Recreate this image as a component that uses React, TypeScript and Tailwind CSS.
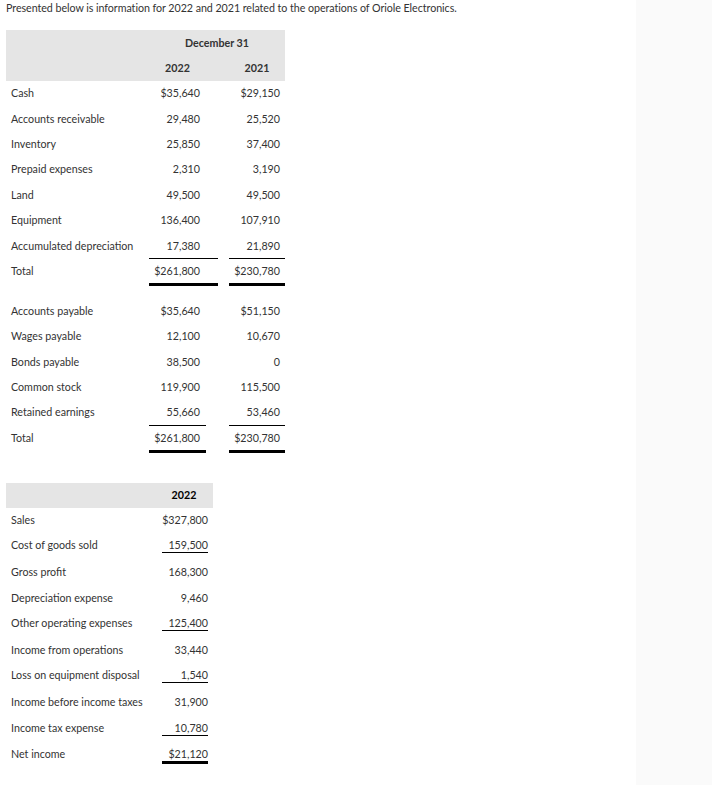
import clsx from 'clsx';

const cn = clsx;

type Line = 'none' | 'thin' | 'thick';

interface BalanceRow {
    label: string;
    y2022: string;
    y2021: string;
    line?: Line;
}

interface IncomeRow {
    label: string;
    amount: string;
    line?: Line;
}

const assets: BalanceRow[] = [
    { label: 'Cash', y2022: '$35,640', y2021: '$29,150' },
    { label: 'Accounts receivable', y2022: '29,480', y2021: '25,520' },
    { label: 'Inventory', y2022: '25,850', y2021: '37,400' },
    { label: 'Prepaid expenses', y2022: '2,310', y2021: '3,190' },
    { label: 'Land', y2022: '49,500', y2021: '49,500' },
    { label: 'Equipment', y2022: '136,400', y2021: '107,910' },
    { label: 'Accumulated depreciation', y2022: '17,380', y2021: '21,890', line: 'thin' },
    { label: 'Total', y2022: '$261,800', y2021: '$230,780', line: 'thick' },
];

const liabilities: BalanceRow[] = [
    { label: 'Accounts payable', y2022: '$35,640', y2021: '$51,150' },
    { label: 'Wages payable', y2022: '12,100', y2021: '10,670' },
    { label: 'Bonds payable', y2022: '38,500', y2021: '0' },
    { label: 'Common stock', y2022: '119,900', y2021: '115,500' },
    { label: 'Retained earnings', y2022: '55,660', y2021: '53,460', line: 'thin' },
    { label: 'Total', y2022: '$261,800', y2021: '$230,780', line: 'thick' },
];

const income: IncomeRow[] = [
    { label: 'Sales', amount: '$327,800' },
    { label: 'Cost of goods sold', amount: '159,500', line: 'thin' },
    { label: 'Gross profit', amount: '168,300' },
    { label: 'Depreciation expense', amount: '9,460' },
    { label: 'Other operating expenses', amount: '125,400', line: 'thin' },
    { label: 'Income from operations', amount: '33,440' },
    { label: 'Loss on equipment disposal', amount: '1,540', line: 'thin' },
    { label: 'Income before income taxes', amount: '31,900' },
    { label: 'Income tax expense', amount: '10,780', line: 'thin' },
    { label: 'Net income', amount: '$21,120', line: 'thick' },
];

function lineClass(line?: Line) {
    if (line === 'thin') return 'border-b border-black';
    if (line === 'thick') return 'border-b-[3px] border-black';
    return '';
}

function BalanceSection({ rows, wide }: { rows: BalanceRow[]; wide?: boolean }) {
    return (
        <div className="flex flex-col">
            {rows.map((row) => {
                // total rows sit between the two rules and are a bit shorter
                const height = row.line === 'thick' ? 'h-[24px]' : 'h-[25.4px]';
                return (
                    <div
                        key={row.label + row.y2022}
                        className={cn(
                            'grid',
                            wide ? 'grid-cols-[143px_69px_11px_56px]' : 'grid-cols-[143px_57px_23px_56px]'
                        )}
                    >
                        <div className={cn('flex items-center whitespace-nowrap pl-[5px]', height)}>
                            {row.label}
                        </div>
                        <div
                            className={cn(
                                'box-content flex items-center justify-end',
                                height,
                                wide ? 'pr-[18px]' : 'pr-[6px]',
                                lineClass(row.line)
                            )}
                        >
                            {row.y2022}
                        </div>
                        <div />
                        <div
                            className={cn(
                                'box-content flex items-center justify-end pr-[5px]',
                                height,
                                lineClass(row.line)
                            )}
                        >
                            {row.y2021}
                        </div>
                    </div>
                );
            })}
        </div>
    );
}

export default function App() {
    return (
        <div className="flex min-h-[785px] w-[712px] bg-white font-['Lato','Liberation_Sans',sans-serif] text-[10.7px] text-[#333]">
            <div className="flex-1 pl-[6px]">
                {/* Intro */}
                <p className="pt-[1px] leading-[14px] tracking-[-0.05px]">
                    Presented below is information for 2022 and 2021 related to the operations of Oriole Electronics.
                </p>

                {/* Balance sheet */}
                <div className="mt-[15px] w-[279px]">
                    <div className="bg-[#e5e5e5]">
                        <div className="grid h-[25.25px] grid-cols-[143px_136px] items-center">
                            <div />
                            <div className="text-center font-bold">December 31</div>
                        </div>
                        <div className="grid h-[25.25px] grid-cols-[143px_57px_23px_56px] items-center">
                            <div />
                            <div className="text-center font-bold">2022</div>
                            <div />
                            <div className="text-center font-bold">2021</div>
                        </div>
                    </div>
                    <BalanceSection rows={assets} wide />
                    <div className="h-[12px]" />
                    <BalanceSection rows={liabilities} />
                </div>

                {/* Income statement */}
                <div className="mt-[29.7px] w-[207px]">
                    <div className="grid h-[25px] grid-cols-[149px_58px] items-center bg-[#e5e5e5]">
                        <div />
                        <div className="text-center font-bold text-black">2022</div>
                    </div>
                    {income.map((row) => (
                        <div key={row.label} className="grid grid-cols-[149px_58px] pt-[5px] pb-[6.6px]">
                            <div className="whitespace-nowrap pl-[5px] leading-[14px]">{row.label}</div>
                            <div className="flex justify-end pr-[5px]">
                                <div className={cn('w-[46px] text-right leading-[14px]', lineClass(row.line))}>
                                    {row.amount}
                                </div>
                            </div>
                        </div>
                    ))}
                </div>
            </div>

            {/* Side rail */}
            <div className="w-[76px] bg-[#fafafa]" />
        </div>
    );
}
